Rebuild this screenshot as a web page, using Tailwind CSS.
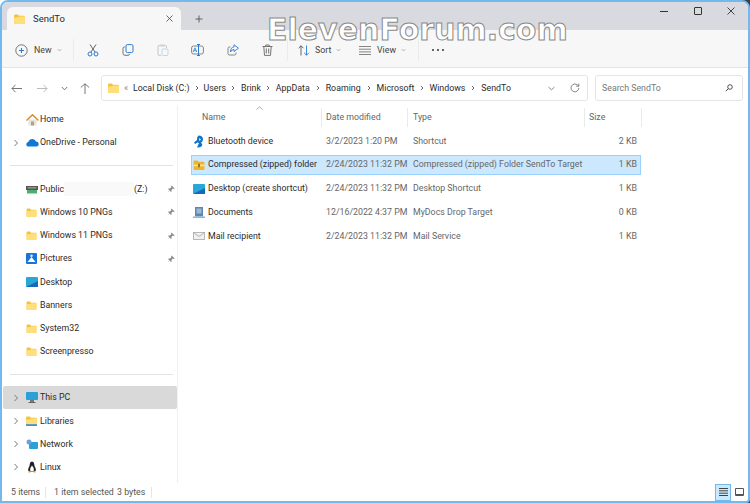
<!DOCTYPE html>
<html><head><meta charset="utf-8">
<script src="https://cdn.jsdelivr.net/npm/@tailwindcss/browser@4"></script>
<title>SendTo</title></head>
<body class="bg-white">
<svg class="hidden" width="0" height="0">
<symbol id="folder" viewBox="0 0 12 11"><path d="M0 1.500Q0 .5 1 .5H4L5.500 2H11Q12 2 12 3V10Q12 11 11 11H1Q0 11 0 10Z" fill="#f5c33b"/><path d="M0 4L4.500 3.600 6 2.800H12V10Q12 11 11 11H1Q0 11 0 10Z" fill="#ffdf7c"/></symbol>
<symbol id="pin" viewBox="0 0 8 8"><path d="M4.600.4L7.600 3.400 6.800 3.900 5.800 3.600 4.400 5 4.600 6.400 4 7 2.600 5.400.8 7.200.7 7.100 2.500 5.300 1 4 1.600 3.400 3 3.600 4.400 2.200 4.100 1.200Z" fill="#8a8a8a"/></symbol>
<symbol id="chev" viewBox="0 0 6 8"><path d="M1.500 1L4.500 4 1.500 7" fill="none" stroke="#777" stroke-width="1"/></symbol>
<symbol id="crumb" viewBox="0 0 4 6"><path d="M1 1L3 3 1 5" fill="none" stroke="#555" stroke-width=".9"/></symbol>
<symbol id="down" viewBox="0 0 6 4"><path d="M1 1L3 3 5 1" fill="none" stroke="#888" stroke-width=".8"/></symbol>
</svg>
<div class="relative w-[750px] h-[503px] overflow-hidden font-['Roboto','Open_Sans',sans-serif] text-[8.800px] leading-none text-[#2a2a2a] whitespace-nowrap">
<div class="absolute right-0 top-0 w-2 h-2 bg-[#3a3f45]"></div>
<div class="absolute right-0 bottom-0 w-2 h-2 bg-[#3a3f45]"></div>
<div class="relative flex flex-col w-full h-full bg-white border-2 border-[#74b9ee] rounded-t-lg rounded-br-sm overflow-hidden">

<!-- title bar -->
<div class="flex h-[28px] shrink-0 bg-[#d9dae0]">
  <div class="flex items-center w-[174px] ml-[5px] mt-[5px] h-[23px] pl-[7px] pr-[8px] bg-[#f7f7f7] rounded-t-md text-[9.500px]">
    <svg class="w-[11px] h-[10px]"><use href="#folder"/></svg>
    <span class="ml-[8px] flex-1">SendTo</span>
    <svg class="w-[7px] h-[7px]" viewBox="0 0 7 7"><path d="M.5.5L6.500 6.500M6.500.5L.5 6.500" stroke="#444" stroke-width=".8"/></svg>
  </div>
  <svg class="w-[8px] h-[8px] ml-[14px] mt-[13px]" viewBox="0 0 8 8"><path d="M4 .5V7.500M.5 4H7.500" stroke="#555" stroke-width=".9"/></svg>
  <div class="ml-auto flex items-start pt-[2px]">
    <div class="w-[33.500px] h-[14px] flex items-center justify-center"><div class="w-[8px] h-px bg-[#333]"></div></div>
    <div class="w-[33.500px] h-[14px] flex items-center justify-center"><div class="w-[8px] h-[8px] border border-[#333] rounded-[1px]"></div></div>
    <div class="w-[33.500px] h-[14px] flex items-center justify-center"><svg class="w-[8px] h-[8px]" viewBox="0 0 8 8"><path d="M.5.5L7.500 7.500M7.500.5L.5 7.500" stroke="#333" stroke-width=".9"/></svg></div>
  </div>
</div>

<!-- command bar -->
<div class="flex items-center h-[38px] shrink-0 pl-[6px] pt-[3px] bg-[#f7f7f7] border-b border-[#e4e4e4] text-[#444]">
  <div class="flex items-center w-[65px] pl-[7px]">
    <svg class="w-[13px] h-[13px]" viewBox="0 0 13 13"><circle cx="6.500" cy="6.500" r="5.700" fill="none" stroke="#666" stroke-width=".9"/><path d="M6.500 4V9M4 6.500H9" stroke="#2b7cd3" stroke-width="1.100"/></svg>
    <span class="ml-[6px]">New</span>
    <svg class="w-[5px] h-[4px] ml-[5px]"><use href="#down"/></svg>
  </div>
  <div class="w-px h-[22px] bg-[#ebebeb]"></div>
  <div class="flex w-[212px] ml-px">
    <div class="w-[35px] flex justify-center"><svg class="w-[12px] h-[13px]" viewBox="0 0 12 13"><path d="M3 .5L8 8M9 .5L4 8" stroke="#555" fill="none" stroke-width=".9"/><circle cx="3" cy="10" r="2" fill="none" stroke="#2b7cd3"/><circle cx="9" cy="10" r="2" fill="none" stroke="#2b7cd3"/></svg></div>
    <div class="w-[35px] flex justify-center"><svg class="w-[12px] h-[12px]" viewBox="0 0 12 12"><rect x="4" y=".6" width="7" height="8" rx="1.400" fill="none" stroke="#2b7cd3"/><path d="M3 3H2.400Q1 3 1 4.500V9.500Q1 11.300 3 11.300H6Q7.500 11.300 7.500 10" fill="none" stroke="#666" stroke-width=".9"/></svg></div>
    <div class="w-[35px] flex justify-center"><svg class="w-[12px] h-[12px]" viewBox="0 0 12 12"><path d="M3 1.600H2Q1 1.600 1 2.600V10Q1 11.400 2 11.400H4M8 1.600H8.600Q9.500 1.600 9.500 2.600V4" fill="none" stroke="#c4c4c4"/><rect x="3" y=".5" width="5" height="2" rx=".8" fill="#d0d0d0"/><rect x="5" y="5" width="6" height="6.500" rx="1" fill="none" stroke="#bcd7ee"/></svg></div>
    <div class="w-[35px] flex justify-center"><svg class="w-[13px] h-[12px]" viewBox="0 0 13 12"><rect x=".6" y="2" width="11.800" height="8" rx="2" fill="none" stroke="#777" stroke-width=".9"/><path d="M7.500 .5V11.500M6 .5H9M6 11.500H9" stroke="#2b7cd3" fill="none"/><path d="M2.200 8L4 3.800 5.800 8M2.800 6.700H5.200" stroke="#2b7cd3" fill="none" stroke-width=".8"/></svg></div>
    <div class="w-[35px] flex justify-center"><svg class="w-[12px] h-[12px]" viewBox="0 0 12 12"><path d="M3.500 3H2.500Q1 3 1 4.500V9.500Q1 11 2.500 11H7.500Q9 11 9 9.500V8.500" fill="none" stroke="#777" stroke-width=".9"/><path d="M7 .8L11.500 4.200 7 7.500V5.500Q4.500 5.500 3.500 8 3.500 3.200 7 3Z" fill="none" stroke="#2b7cd3" stroke-width=".9"/></svg></div>
    <div class="w-[35px] flex justify-center"><svg class="w-[11px] h-[12px]" viewBox="0 0 11 12"><path d="M.5 2.500H10.500M3.800 2.500V1H7.200V2.500M1.800 2.500L2.500 11.400H8.500L9.200 2.500M4.300 4.500V9.500M6.700 4.500V9.500" fill="none" stroke="#666" stroke-width=".9"/></svg></div>
  </div>
  <div class="w-px h-[22px] bg-[#ebebeb]"></div>
  <div class="flex items-center w-[65px] pl-[10px]">
    <svg class="w-[12px] h-[11px]" viewBox="0 0 12 11"><path d="M3 10.500V.8M.6 3.200L3 .8 5.400 3.200" fill="none" stroke="#555" stroke-width=".9"/><path d="M8.500.5V10.200M6.100 7.800L8.500 10.200 10.900 7.800" fill="none" stroke="#2b7cd3" stroke-width=".9"/></svg>
    <span class="ml-[5px]">Sort</span>
    <svg class="w-[5px] h-[4px] ml-[5px]"><use href="#down"/></svg>
  </div>
  <div class="flex items-center w-[65px] pl-[6px]">
    <svg class="w-[12px] h-[9px]" viewBox="0 0 12 9"><path d="M0 .5H12M0 3.200H12M0 5.900H12M0 8.500H12" stroke="#666" stroke-width=".8"/></svg>
    <span class="ml-[6px]">View</span>
    <svg class="w-[5px] h-[4px] ml-[5px]"><use href="#down"/></svg>
  </div>
  <div class="w-px h-[22px] bg-[#ebebeb]"></div>
  <div class="flex gap-[3px] ml-[13px]"><i class="w-[2px] h-[2px] rounded-full bg-[#333]"></i><i class="w-[2px] h-[2px] rounded-full bg-[#333]"></i><i class="w-[2px] h-[2px] rounded-full bg-[#333]"></i></div>
</div>

<!-- address row -->
<div class="flex items-center h-[37px] shrink-0 pt-[3px] pr-[5px]">
  <svg class="w-[11px] h-[9px] ml-[9px]" viewBox="0 0 11 9"><path d="M4.500.8L1 4.500 4.500 8.200M1 4.500H11" fill="none" stroke="#666" stroke-width=".9"/></svg>
  <svg class="w-[11px] h-[9px] ml-[15px]" viewBox="0 0 11 9"><path d="M6.500.8L10 4.500 6.500 8.200M0 4.500H10" fill="none" stroke="#b4b4b4" stroke-width=".9"/></svg>
  <svg class="w-[7px] h-[5px] ml-[13px]" viewBox="0 0 7 5"><path d="M.8 1L3.500 3.800 6.200 1" fill="none" stroke="#666" stroke-width=".9"/></svg>
  <svg class="w-[10px] h-[11px] ml-[12px]" viewBox="0 0 10 11"><path d="M.8 4.500L5 .8 9.200 4.500M5 .8V11" fill="none" stroke="#666" stroke-width=".9"/></svg>
  <div class="flex items-center w-[487px] h-[26px] ml-[11px] pl-[6px] border border-[#e5e5e5] rounded-[3px]">
    <svg class="w-[11px] h-[10px] shrink-0"><use href="#folder"/></svg>
    <span class="ml-[5px] w-[8px] text-[#888]">«</span>
    <span class="ml-[1px]">Local Disk (C:)</span>
    <svg class="w-[4px] h-[6px] mx-[5px]"><use href="#crumb"/></svg><span>Users</span>
    <svg class="w-[4px] h-[6px] mx-[5.500px]"><use href="#crumb"/></svg><span>Brink</span>
    <svg class="w-[4px] h-[6px] mx-[5.500px]"><use href="#crumb"/></svg><span>AppData</span>
    <svg class="w-[4px] h-[6px] mx-[6px]"><use href="#crumb"/></svg><span>Roaming</span>
    <svg class="w-[4px] h-[6px] mx-[6px]"><use href="#crumb"/></svg><span>Microsoft</span>
    <svg class="w-[4px] h-[6px] mx-[5.500px]"><use href="#crumb"/></svg><span>Windows</span>
    <svg class="w-[4px] h-[6px] mx-[6px]"><use href="#crumb"/></svg><span>SendTo</span>
    <svg class="w-[7px] h-[5px] ml-auto" viewBox="0 0 7 5"><path d="M.5 1L3.500 3.800 6.500 1" fill="none" stroke="#666" stroke-width=".8"/></svg>
    <svg class="w-[10px] h-[10px] ml-[15px] mr-[7px]" viewBox="0 0 10 10"><path d="M8.800 5A3.900 3.900 0 1 1 7.600 2.100L8.800 3.200M8.800.6V3.200H6.200" fill="none" stroke="#666" stroke-width=".8"/></svg>
  </div>
  <div class="flex items-center w-[148px] h-[26px] ml-[7px] pl-[6px] pr-[9px] border border-[#e5e5e5] rounded-[3px] text-[#777]">
    <span>Search SendTo</span>
    <svg class="w-[8px] h-[8px] ml-auto" viewBox="0 0 8 8"><circle cx="5" cy="3" r="2.300" fill="none" stroke="#444" stroke-width=".9"/><path d="M3.300 4.700L.8 7.200" stroke="#444"/></svg>
  </div>
</div>

<!-- main -->
<div class="flex flex-1 min-h-0">
  <!-- sidebar -->
  <nav class="w-[176px] shrink-0 pl-px pt-[3px] border-r border-[#f0f0f0]">
    <div class="flex items-center h-[23.200px] pl-[23px]"><svg class="w-[13px] h-[12px]" viewBox="0 0 13 12"><path d="M2.500 5.500H10.500V11.500H2.500Z" fill="#e9e4da"/><path d="M5 7.500H8V11.500H5Z" fill="#a8a29a"/><path d="M.5 6.500L6.500.8 12.500 6.500" fill="none" stroke="#d98a2b" stroke-width="1.500"/></svg><span class="ml-[1px]">Home</span></div>
    <div class="flex items-center h-[23.200px] pl-[10px]"><svg class="w-[6px] h-[8px]"><use href="#chev"/></svg><svg class="w-[13px] h-[9px] ml-[7px]" viewBox="0 0 13 9"><path d="M3 8.500Q.3 8.500.3 6.200 .3 4.300 2.300 4 3.300 1 6.500 1 9 1 10 3.500 12.700 3.700 12.700 6.300 12.700 8.500 10.500 8.500Z" fill="#0f78d4"/></svg><span class="ml-[1px]">OneDrive - Personal</span></div>
    <div class="flex items-center h-[23.200px] pl-[7px]"><div class="w-[163px] h-px bg-[#e3e3e3]"></div></div>
    <div class="flex items-center h-[23.200px] pl-[23px] pr-[2px]"><svg class="w-[12px] h-[9px]" viewBox="0 0 12 9"><rect y="1" width="12" height="4" fill="#555"/><rect x="1.500" y="2.500" width="9" height=".8" fill="#ccc"/><rect x="1" y="5" width="10" height="3.500" fill="#4caf6d"/></svg><span class="ml-[2px] w-[24px]">Public</span><span class="w-[70px] h-[14px] bg-[#f9f9f9]"></span><span>(Z:)</span><svg class="w-[8px] h-[8px] ml-auto"><use href="#pin"/></svg></div>
    <div class="flex items-center h-[23.200px] pl-[23px] pr-[2px]"><svg class="w-[11px] h-[9px]"><use href="#folder"/></svg><span class="ml-[3px]">Windows 10 PNGs</span><svg class="w-[8px] h-[8px] ml-auto"><use href="#pin"/></svg></div>
    <div class="flex items-center h-[23.200px] pl-[23px] pr-[2px]"><svg class="w-[11px] h-[9px]"><use href="#folder"/></svg><span class="ml-[3px]">Windows 11 PNGs</span><svg class="w-[8px] h-[8px] ml-auto"><use href="#pin"/></svg></div>
    <div class="flex items-center h-[23.200px] pl-[23px] pr-[2px]"><svg class="w-[11px] h-[11px]" viewBox="0 0 11 11"><rect width="11" height="11" rx="1" fill="#1a73d9"/><path d="M1.500 9L5.500 4 9.500 9Z" fill="#fff"/><circle cx="5.500" cy="2.800" r="1.300" fill="#cfe6fb"/></svg><span class="ml-[3px]">Pictures</span><svg class="w-[8px] h-[8px] ml-auto"><use href="#pin"/></svg></div>
    <div class="flex items-center h-[23.200px] pl-[23px]"><svg class="w-[12px] h-[10px]" viewBox="0 0 12 10"><rect width="12" height="10" rx="1" fill="#29a7d9"/><path d="M0 10L12 4V10Z" fill="#1668b8"/></svg><span class="ml-[2px]">Desktop</span></div>
    <div class="flex items-center h-[23.200px] pl-[23px]"><svg class="w-[11px] h-[9px]"><use href="#folder"/></svg><span class="ml-[3px]">Banners</span></div>
    <div class="flex items-center h-[23.200px] pl-[23px]"><svg class="w-[11px] h-[9px]"><use href="#folder"/></svg><span class="ml-[3px]">System32</span></div>
    <div class="flex items-center h-[23.200px] pl-[23px]"><svg class="w-[11px] h-[9px]"><use href="#folder"/></svg><span class="ml-[3px]">Screenpresso</span></div>
    <div class="flex items-center h-[23.200px] pl-[7px]"><div class="w-[163px] h-px bg-[#e3e3e3]"></div></div>
    <div class="flex items-center h-[23.200px] pl-[10px] bg-[#d9d9d9] rounded-[2px]"><svg class="w-[6px] h-[8px]"><use href="#chev"/></svg><svg class="w-[12px] h-[11px] ml-[7px]" viewBox="0 0 12 11"><rect width="12" height="8" rx="1" fill="#2a9fd8"/><rect x="4" y="8" width="4" height="2" fill="#777"/><rect x="2.500" y="10" width="7" height="1" fill="#666"/></svg><span class="ml-[2px]">This PC</span></div>
    <div class="flex items-center h-[23.200px] pl-[10px]"><svg class="w-[6px] h-[8px]"><use href="#chev"/></svg><svg class="w-[11px] h-[10px] ml-[7px]" viewBox="0 0 12 11"><use href="#folder"/><rect y="9" width="12" height="2" fill="#3f8fd8"/></svg><span class="ml-[3px]">Libraries</span></div>
    <div class="flex items-center h-[23.200px] pl-[10px]"><svg class="w-[6px] h-[8px]"><use href="#chev"/></svg><svg class="w-[12px] h-[11px] ml-[7px]" viewBox="0 0 12 11"><rect x="3" y="3" width="9" height="7" rx="1" fill="#2a9fd8"/><circle cx="3" cy="3" r="2.500" fill="#6d9fd8"/></svg><span class="ml-[2px]">Network</span></div>
    <div class="flex items-center h-[23.200px] pl-[10px]"><svg class="w-[6px] h-[8px]"><use href="#chev"/></svg><svg class="w-[10px] h-[12px] ml-[8px]" viewBox="0 0 10 12"><path d="M5 .5Q7.200.5 7.200 3 7.200 5 8.500 7 9.500 9 8.200 10.500L1.800 10.500Q.5 9 1.500 7 2.800 5 2.800 3 2.800.5 5 .5Z" fill="#222"/><path d="M5 4.500Q7 6 6.800 10H3.200Q3 6 5 4.500Z" fill="#fff"/><path d="M1 11.500L3 10 3.500 11.500ZM9 11.500L7 10 6.500 11.500Z" fill="#e8a424"/></svg><span class="ml-[3px]">Linux</span></div>
  </nav>

  <!-- file list -->
  <section class="relative flex-1 pl-[13px] text-[#666]">
    <svg class="absolute left-[78px] top-[1px] w-[7px] h-[4px]" viewBox="0 0 7 4"><path d="M.5 3.500L3.500.8 6.500 3.500" fill="none" stroke="#999" stroke-width=".8"/></svg>
    <div class="flex h-[19px] mt-[3px] items-center text-[#666]">
      <div class="w-[131px] pl-[11px] h-full flex items-center border-r border-[#eaeaea]">Name</div>
      <div class="w-[86px] pl-[4px] h-full flex items-center border-r border-[#eaeaea]">Date modified</div>
      <div class="w-[177px] pl-[5px] h-full flex items-center border-r border-[#eaeaea]">Type</div>
      <div class="w-[57px] pl-[4px] h-full flex items-center border-r border-[#eaeaea]">Size</div>
    </div>
    <div class="mt-[4px] flex flex-col w-[450px]">
      <div class="flex items-center h-[20px] mb-[3.800px] border border-transparent">
        <div class="w-[130px] flex items-center pl-[1px] text-[#2a2a2a]"><svg class="w-[11px] h-[13px]" viewBox="0 0 11 13"><path d="M5.500.5Q10 .5 10 4.500 10 6.500 8 7.500 10 9 9 11 7.500 12.500 4 12.500L6 8 4.500 7.500 2 9 1 7.500 4 5Q3.500 2 5.500.5Z" fill="#1473c9"/><path d="M6 3L8 4.500 6.500 6Z" fill="#fff"/></svg><span class="ml-[4px]">Bluetooth device</span></div>
        <div class="w-[86px] pl-[4px]">3/2/2023 1:20 PM</div><div class="w-[177px] pl-[5px]">Shortcut</div><div class="w-[52px] text-right">2 KB</div>
      </div>
      <div class="flex items-center h-[20px] mb-[3.800px] bg-[#cce8ff] border border-[#99d1ff]">
        <div class="w-[130px] flex items-center pl-[1px] text-[#2a2a2a]"><svg class="w-[12px] h-[10px]" viewBox="0 0 12 11"><path d="M0 1.500Q0 .5 1 .5H4L5.500 2H11Q12 2 12 3V10Q12 11 11 11H1Q0 11 0 10Z" fill="#f0b429"/><path d="M0 5H12V7H0Z" fill="#ffe28a"/><path d="M5 4H7V8H5Z" fill="#8a6d3b"/></svg><span class="ml-[3px]">Compressed (zipped) folder</span></div>
        <div class="w-[86px] pl-[4px]">2/24/2023 11:32 PM</div><div class="w-[177px] pl-[5px]">Compressed (zipped) Folder SendTo Target</div><div class="w-[52px] text-right">1 KB</div>
      </div>
      <div class="flex items-center h-[20px] mb-[3.800px] border border-transparent">
        <div class="w-[130px] flex items-center pl-[1px] text-[#2a2a2a]"><svg class="w-[12px] h-[10px]" viewBox="0 0 12 10"><rect width="12" height="10" rx="1" fill="#29a7d9"/><path d="M0 10L12 4V10Z" fill="#1668b8"/></svg><span class="ml-[3px]">Desktop (create shortcut)</span></div>
        <div class="w-[86px] pl-[4px]">2/24/2023 11:32 PM</div><div class="w-[177px] pl-[5px]">Desktop Shortcut</div><div class="w-[52px] text-right">1 KB</div>
      </div>
      <div class="flex items-center h-[20px] mb-[3.800px] border border-transparent">
        <div class="w-[130px] flex items-center pl-[1px] text-[#2a2a2a]"><svg class="w-[12px] h-[11px]" viewBox="0 0 12 11"><rect x="2" width="8" height="9.500" fill="#5f86ad"/><rect x="3.500" y="1.500" width="5" height="5" fill="#9db8d2"/><rect y="9.500" width="12" height="1.500" fill="#8fb6d8"/></svg><span class="ml-[3px]">Documents</span></div>
        <div class="w-[86px] pl-[4px]">12/16/2022 4:37 PM</div><div class="w-[177px] pl-[5px]">MyDocs Drop Target</div><div class="w-[52px] text-right">0 KB</div>
      </div>
      <div class="flex items-center h-[20px] border border-transparent">
        <div class="w-[130px] flex items-center pl-[1px] text-[#2a2a2a]"><svg class="w-[12px] h-[8px]" viewBox="0 0 12 8"><rect x=".5" y=".5" width="11" height="7" fill="#f0f0f0" stroke="#b9b9b9"/><path d="M.5.5L6 4.500 11.500.5" fill="none" stroke="#9a9a9a" stroke-width=".7"/></svg><span class="ml-[3px]">Mail recipient</span></div>
        <div class="w-[86px] pl-[4px]">2/24/2023 11:32 PM</div><div class="w-[177px] pl-[5px]">Mail Service</div><div class="w-[52px] text-right">1 KB</div>
      </div>
    </div>
  </section>
</div>

<!-- status bar -->
<div class="flex items-center h-[18px] shrink-0 pl-[9px] pr-[1px] text-[#555]">
  <span class="w-[34px]">5 items</span><div class="w-px h-[11px] bg-[#e5e5e5] mr-[8px]"></div>
  <span class="w-[63px]">1 item selected</span><span class="w-[34px]">3 bytes</span><div class="w-px h-[11px] bg-[#e5e5e5]"></div>
  <div class="ml-auto flex items-center">
    <div class="flex items-center justify-center w-[16px] h-[17px] bg-[#cce8ff] border border-[#74b9ee]"><svg class="w-[9px] h-[8px]" viewBox="0 0 9 8"><path d="M0 .5H9M0 2.800H9M0 5.200H9M0 7.500H9" stroke="#444"/></svg></div>
    <div class="flex items-center justify-center w-[16px] h-[17px]"><div class="w-[9px] h-[8px] border border-[#555] border-b-2 rounded-[1px]"></div></div>
  </div>
</div>
</div>

<!-- watermark -->
<div class="absolute left-[267px] top-[16px] font-['DejaVu_Sans',sans-serif] font-bold text-[30px] leading-[28px] text-white [-webkit-text-stroke:1px_#8a8a8a]">ElevenForum.com</div>
</div>
</body></html>
